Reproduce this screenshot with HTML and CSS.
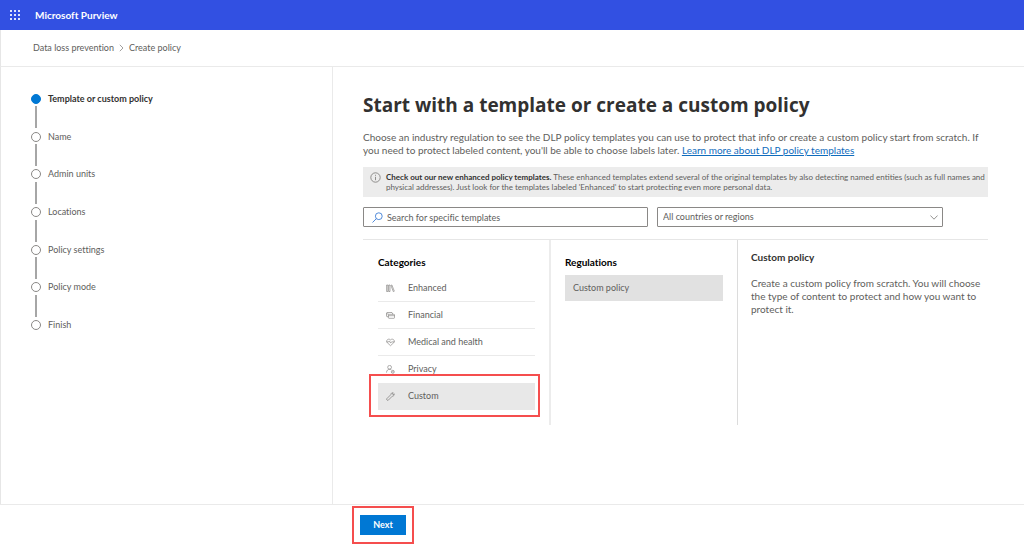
FILE: index.html
```html
<!DOCTYPE html>
<html lang="en">
<head>
<meta charset="utf-8">
<meta name="viewport" content="width=device-width, initial-scale=1">
<title>Microsoft Purview</title>
<link rel="stylesheet" href="styles.css">
</head>
<body>
<div class="app">
  <header class="topbar">
    <button class="waffle" type="button" aria-label="App launcher">
      <svg width="10" height="10" viewBox="0 0 10 10" fill="#fff"><path d="M0 0h2v2H0zM4 0h2v2H4zM8 0h2v2H8zM0 4h2v2H0zM4 4h2v2H4zM8 4h2v2H8zM0 8h2v2H0zM4 8h2v2H4zM8 8h2v2H8z" opacity=".85"/></svg>
    </button>
    <span class="brand">Microsoft Purview</span>
  </header>
  <nav class="breadcrumb" aria-label="Breadcrumb">
    <a href="#">Data loss prevention</a>
    <svg width="5" height="8" viewBox="0 0 5 8" fill="none" stroke="#8a8886" stroke-width=".8"><path d="M.8.8 4 4 .8 7.2"/></svg>
    <span>Create policy</span>
  </nav>
  <div class="body">
    <aside class="sidebar">
      <ol class="steps">
        <li class="step step-current" aria-current="step"><span class="dot"></span>Template or custom policy</li>
        <li class="step"><span class="dot"></span>Name</li>
        <li class="step"><span class="dot"></span>Admin units</li>
        <li class="step"><span class="dot"></span>Locations</li>
        <li class="step"><span class="dot"></span>Policy settings</li>
        <li class="step"><span class="dot"></span>Policy mode</li>
        <li class="step"><span class="dot"></span>Finish</li>
      </ol>
    </aside>
    <main class="content">
      <h1 class="title">Start with a template or create a custom policy</h1>
      <p class="intro">Choose an industry regulation to see the DLP policy templates you can use to protect that info or create a custom policy start from scratch. If you need to protect labeled content, you'll be able to choose labels later. <a href="#">Learn more about DLP policy templates</a></p>
      <div class="notice">
        <svg class="notice-icon" width="11" height="11" viewBox="0 0 11 11" fill="none" stroke="#797775" stroke-width=".8"><circle cx="5.5" cy="5.5" r="4.7"/><path d="M5.5 4.8v3.4M5.5 2.8v1"/></svg>
        <p><strong>Check out our new enhanced policy templates.</strong> These enhanced templates extend several of the original templates by also detecting named entities (such as full names and physical addresses). Just look for the templates labeled 'Enhanced' to start protecting even more personal data.</p>
      </div>
      <div class="filters">
        <label class="field search">
          <svg width="11" height="11" viewBox="0 0 11 11" fill="none" stroke="#3f7fd6" stroke-width=".9"><circle cx="6.8" cy="4.2" r="3.4"/><path d="M4.4 6.6.5 10.5"/></svg>
          <input type="search" placeholder="Search for specific templates" aria-label="Search for specific templates">
        </label>
        <div class="field region">
          <select aria-label="Countries or regions"><option>All countries or regions</option></select>
          <svg width="8" height="5" viewBox="0 0 8 5" fill="none" stroke="#797775" stroke-width=".8"><path d="M.4.5 4 4.2 7.6.5"/></svg>
        </div>
      </div>
      <div class="picker">
        <section class="column categories">
          <h2>Categories</h2>
          <ul>
            <li><button type="button"><svg width="9" height="9" viewBox="0 0 9 9" fill="none" stroke="#797775" stroke-width=".6"><path d="M.6 1h1.300v6.500H.6zM2.700 1h1.300v6.500H2.700zM4.900 1.300l1-.3 2.400 6.200-1 .4z"/></svg>Enhanced</button></li>
            <li><button type="button"><svg width="9" height="9" viewBox="0 0 9 9" fill="none" stroke="#797775" stroke-width=".6"><rect x="2.400" y="3.300" width="6.100" height="4" rx=".6"/><path d="M2.400 5.700H.9L.5 5.300V2l.4-.5H6l.5.5v1.300M.5 2.900h2M2.400 4.700h6.100"/></svg>Financial</button></li>
            <li><button type="button"><svg width="9" height="9" viewBox="0 0 9 9" fill="none" stroke="#797775" stroke-width=".6"><path d="M4.500 7.700 1.200 4.600C-.5 2.600 2.300-.2 4.500 1.900 6.700-.2 9.500 2.600 7.800 4.600zM.4 3.900h2.200l.8-1 1.200 2.200.9-1.200h3.100"/></svg>Medical and health</button></li>
            <li><button type="button"><svg width="9" height="9" viewBox="0 0 9 9" fill="none" stroke="#797775" stroke-width=".6"><circle cx="3.600" cy="2.300" r="1.900"/><path d="M.5 7.600C.6 5.300 2 4.300 3.600 4.300c.7 0 1.200.1 1.700.4"/><circle cx="6.800" cy="6.800" r="1.500"/><path d="M5.800 6.800h2"/></svg>Privacy</button></li>
            <li class="selected"><button type="button" aria-pressed="true"><svg width="9" height="9" viewBox="0 0 9 9" fill="none" stroke="#797775" stroke-width=".7"><path d="M.8 6.700 4.800 2.700C4.800 1.300 6 .5 7.200.8L6.300 1.900l.8.8L8.200 1.800C8.500 3 7.700 4.200 6.300 4.200L2.300 8.200C1.500 8.900.1 7.500.8 6.700z"/></svg>Custom</button><span class="highlight"></span></li>
          </ul>
        </section>
        <section class="column regulations">
          <h2>Regulations</h2>
          <button class="regulation" type="button" aria-pressed="true">Custom policy</button>
        </section>
        <section class="detail">
          <h2>Custom policy</h2>
          <p>Create a custom policy from scratch. You will choose the type of content to protect and how you want to protect it.</p>
        </section>
      </div>
    </main>
  </div>
  <footer class="footer">
    <span class="next-wrap"><button class="next" type="button">Next</button></span>
  </footer>
</div>
</body>
</html>
```
FILE: styles.css
```css
* { box-sizing: border-box; }
body, h1, h2, p, ol, ul { margin: 0; padding: 0; }
ol, ul { list-style: none; }
body {
  background: #fff;
  color: #605e5c;
  font: 9px/12px Lato, "Open Sans", sans-serif;
  font-variant-ligatures: none;
}
button, input, select { font: inherit; color: inherit; font-variant-ligatures: inherit; }
button { border: 0; background: none; padding: 0; }
svg { flex: none; display: block; }

.app { display: flex; flex-direction: column; min-height: 100vh; }
.topbar {
  display: flex;
  align-items: center;
  gap: 15px;
  height: 30px;
  padding-left: 10px;
  background: #3250e2;
  color: #fff;
}
.brand { font-size: 10px; font-weight: 700; }
.breadcrumb {
  display: flex;
  align-items: center;
  gap: 5px;
  height: 37px;
  padding-left: 32px;
  border-left: 1px solid #e6e6e6;
  border-bottom: 1px solid #eaeaea;
}
.breadcrumb a { color: inherit; text-decoration: none; }
.body { display: flex; flex: 1; border-left: 1px solid #e6e6e6; }

.sidebar {
  flex: 0 0 332px;
  padding: 13px 0 0 30px;
  border-right: 1px solid #eaeaea;
}
.steps { display: flex; flex-direction: column; height: 264px; }
.step { position: relative; flex: 1; display: flex; align-items: center; gap: 7px; }
.step + .step::before {
  content: "";
  position: absolute;
  left: 4px;
  bottom: 27px;
  width: 2px;
  height: 22px;
  background: #a6a6a6;
}
.dot { width: 10px; height: 10px; border: 1px solid #8a8886; border-radius: 50%; }
.step-current { color: #323130; font-weight: 700; }
.step-current .dot { background: #0078d4; border-color: #0078d4; }

.content { flex: 1; min-width: 0; padding: 24px 36px 24px 30px; }
.title {
  color: #323130;
  font-family: "Open Sans", "Noto Sans", sans-serif;
  font-size: 19px;
  line-height: 28px;
  font-weight: 700;
}
.intro { margin-top: 12px; font-size: 10px; line-height: 13px; }
.intro a { color: #0f6cbd; }
.notice {
  display: flex;
  gap: 5px;
  margin-top: 10px;
  padding: 5px 0 5px 7px;
  background: #ececec;
  font-size: 8px;
  line-height: 10px;
  font-variant-ligatures: normal;
}
.notice strong { color: #323130; font-weight: 700; }
.filters { display: flex; gap: 9px; margin: 10px 45px 12px 0; }
.field {
  flex: 1;
  display: flex;
  align-items: center;
  height: 20px;
  border: 1px solid #8a8886;
  border-radius: 1px;
}
.field input, .field select {
  appearance: none;
  flex: 1;
  min-width: 0;
  height: 18px;
  padding: 0;
  border: 0;
  background: none;
  outline: 0;
}
.search { gap: 4px; padding-left: 8px; }
.search input::placeholder { color: #605e5c; opacity: 1; }
.region { padding: 0 4px 0 5px; }

.picker {
  display: grid;
  grid-template-columns: 188fr 187fr 250fr;
  border-top: 1px solid #e6e6e6;
}
.column { min-height: 185px; padding: 16px 14px 15px 15px; }
.categories { border-right: 2px solid #ececec; }
.regulations { border-right: 1px solid #dcdcdc; padding-left: 14px; }
.picker h2 { color: #000; font-size: 10px; line-height: 13px; font-weight: 700; }
.categories ul { margin-top: 6px; }
.categories li { position: relative; border-bottom: 1px solid #eaeaea; }
.categories li:nth-child(n + 4) { border-color: transparent; }
.categories li button {
  display: flex;
  align-items: center;
  gap: 13px;
  width: 100%;
  height: 26px;
  padding-left: 8px;
}
.categories .selected { background: #e8e8e8; }
.highlight {
  position: absolute;
  inset: -9px -5px -8px -9px;
  border: 2px solid #f54e4e;
  pointer-events: none;
}
.regulation {
  width: 100%;
  height: 26px;
  margin-top: 6px;
  padding-left: 8px;
  background: #e1e1e1;
  text-align: left;
}
.detail { padding: 11px 0 0 13px; }
.picker .detail h2 { color: #323130; }
.detail p { margin-top: 13px; font-size: 10px; line-height: 13px; }

.footer {
  display: flex;
  align-items: center;
  height: 40px;
  padding: 1px 0 0 352px;
  border-top: 1px solid #eaeaea;
}
.next-wrap { padding: 7px 6px; border: 2px solid #f54e4e; }
.next {
  display: block;
  width: 46px;
  height: 20px;
  background: #0078d4;
  color: #fff;
  font-weight: 700;
}
```
